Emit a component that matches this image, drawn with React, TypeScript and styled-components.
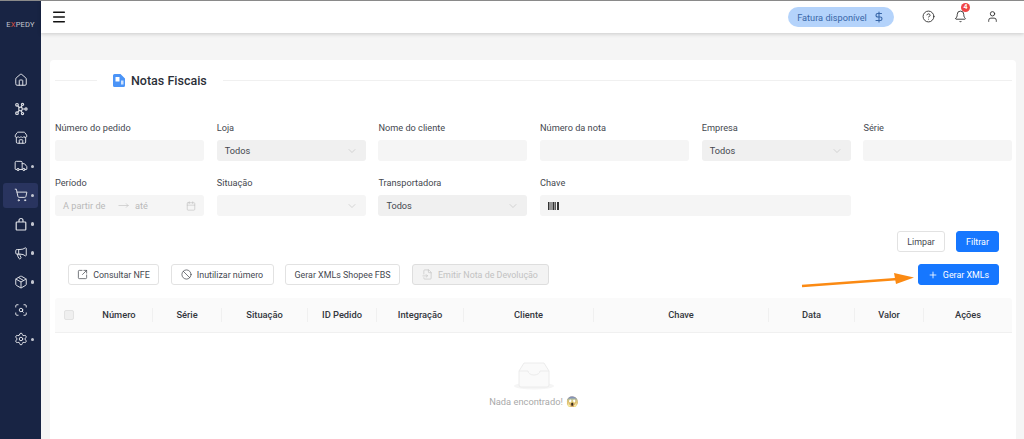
import styled, { createGlobalStyle } from "styled-components";
import {
  Ban,
  Bell,
  Calendar,
  CircleHelp,
  ChevronDown,
  DollarSign,
  Home,
  Megaphone,
  Menu,
  MoveRight,
  Package,
  Plus,
  ScanSearch,
  Settings,
  ShoppingCart,
  SquareArrowOutUpRight,
  Store,
  Truck,
  User,
  FileInput,
} from "lucide-react";

const GlobalStyle = createGlobalStyle`
  html, body { margin: 0; padding: 0; height: 100%; overflow: hidden; background: #f5f5f5; }
  * { box-sizing: border-box; }
  body { font-family: Roboto, "Noto Sans", sans-serif; color: #3f3f46; }
`;

const Page = styled.div`
  display: flex;
  width: 1024px;
  height: 439px;
  overflow: hidden;
  border-top: 1px solid #8a8a8a;
`;

const Sidebar = styled.aside`
  width: 41px;
  flex: none;
  background: #182444;
  display: flex;
  flex-direction: column;
  align-items: center;
`;

const Logo = styled.div`
  margin-top: 19px;
  height: 10px;
  font-size: 7.5px;
  line-height: 10px;
  letter-spacing: 0.2px;
  color: #c4c7d0;
  span { color: #d8503f; }
`;

const SideNav = styled.nav`
  margin-top: 37.5px;
  display: flex;
  flex-direction: column;
  gap: 3.8px;
  width: 100%;
  align-items: center;
`;

const SideItem = styled.div<{ $active?: boolean }>`
  position: relative;
  width: 35px;
  height: 25px;
  border-radius: 3px;
  background: ${(p) => (p.$active ? "#29345f" : "transparent")};
  color: #dfe1e7;
  display: flex;
  align-items: center;
  padding-left: 10.5px;
`;

const Dot = styled.i`
  position: absolute;
  left: 27.5px;
  top: 11px;
  width: 3.5px;
  height: 3.5px;
  border-radius: 50%;
  background: #c3c6d0;
`;

const Main = styled.div`
  flex: 1;
  display: flex;
  flex-direction: column;
  min-width: 0;
`;

const Header = styled.header`
  height: 32px;
  flex: none;
  background: #fff;
  box-shadow: 0 1px 4px rgba(0, 0, 0, 0.18);
  display: flex;
  align-items: center;
  padding: 0 0 0 10px;
  position: relative;
  color: #111;
`;

const Spacer = styled.div`
  flex: 1;
`;

const InvoicePill = styled.div`
  width: 106px;
  height: 20px;
  border-radius: 10px;
  background: #b4d3fb;
  color: #3766a8;
  font-size: 9.2px;
  display: flex;
  align-items: center;
  justify-content: center;
  gap: 6px;
  margin-right: 28px;
`;

const HeaderIcon = styled.div`
  position: relative;
  width: 14px;
  height: 14px;
  display: flex;
  margin-right: 18px;
  color: #333;
  &:last-child { margin-right: 24px; }
`;

const Badge = styled.span`
  position: absolute;
  left: 7px;
  top: -7px;
  width: 9px;
  height: 9px;
  border-radius: 50%;
  background: #f04545;
  color: #fff;
  font-size: 7px;
  line-height: 9px;
  text-align: center;
  font-weight: 600;
`;

const Card = styled.main`
  flex: 1;
  margin: 27px 8px 0 9px;
  background: #fff;
  border-radius: 4px 4px 0 0;
  padding: 0 4px 0 5px;
  position: relative;
`;

const TitleRow = styled.div`
  display: flex;
  align-items: center;
  height: 40px;
  margin-bottom: 21px;
`;

const TitleRule = styled.div<{ $grow?: boolean }>`
  height: 1px;
  background: #f0f0f0;
  width: 42px;
  flex: ${(p) => (p.$grow ? 1 : "none")};
`;

const Title = styled.h1`
  margin: 0;
  padding: 0 16px;
  display: flex;
  align-items: center;
  gap: 6px;
  font-size: 12.5px;
  font-weight: 500;
  color: #2b2f38;
`;

const FilterGrid = styled.section`
  display: grid;
  grid-template-columns: repeat(6, 149px);
  column-gap: 12.7px;
  row-gap: 15px;
`;

const Field = styled.label<{ $span?: number }>`
  display: flex;
  flex-direction: column;
  gap: 6px;
  grid-column: span ${(p) => p.$span ?? 1};
  font-size: 9.2px;
  line-height: 13px;
  color: #45484f;
`;

const Input = styled.div<{ $select?: boolean }>`
  height: 21px;
  border-radius: 3px;
  background: ${(p) => (p.$select ? "#f0f0f0" : "#f5f5f5")};
  display: flex;
  align-items: center;
  padding: 0 8px;
  font-size: 9.2px;
  color: #45484f;
  gap: 6px;
  white-space: nowrap;
`;

const Faded = styled.span<{ $width?: number }>`
  color: #b9b9b9;
  width: ${(p) => p.$width ?? 0}px;
`;

const Caret = styled(ChevronDown)`
  margin-left: auto;
  color: #bdbdbd;
`;

const FilterActions = styled.div`
  display: flex;
  justify-content: flex-end;
  gap: 11px;
  padding-right: 13px;
  margin-top: 15px;
`;

const Button = styled.button<{ $primary?: boolean; $width: number }>`
  height: 21px;
  width: ${(p) => p.$width}px;
  border-radius: 3px;
  border: 1px solid ${(p) => (p.$primary ? "#1677ff" : "#e2e2e2")};
  background: ${(p) => (p.$primary ? "#1677ff" : "#fff")};
  color: ${(p) => (p.$primary ? "#fff" : "#45484f")};
  font-family: inherit;
  font-size: 8.9px;
  padding: 0;
  display: inline-flex;
  align-items: center;
  justify-content: center;
  gap: 5px;
  &:disabled {
    background: #f3f3f3;
    color: #c2c2c2;
    border-color: #dedede;
  }
`;

const ActionBar = styled.div`
  display: flex;
  align-items: center;
  gap: 11.5px;
  margin-top: 12px;
  padding: 0 13px;
`;

const ActionSpacer = styled.div`
  flex: 1;
`;

const TableHead = styled.div`
  margin-top: 13px;
  height: 35px;
  background: #fafafa;
  border-bottom: 1px solid #f0f0f0;
  border-radius: 3px 3px 0 0;
  display: flex;
  align-items: center;
  width: 957px;
`;

const HeadCell = styled.div<{ $width: number; $last?: boolean }>`
  width: ${(p) => p.$width}px;
  flex: none;
  text-align: center;
  font-size: 9.3px;
  font-weight: 500;
  color: #33363d;
  line-height: 14px;
  border-right: ${(p) => (p.$last ? "none" : "1px solid #f0f0f0")};
`;

const CheckCell = styled.div`
  width: 31px;
  flex: none;
  padding-left: 9px;
`;

const Check = styled.div`
  width: 10px;
  height: 10px;
  background: #efefef;
  border: 1px solid #e2e2e2;
  border-radius: 2px;
`;

const Empty = styled.div`
  margin-top: 29px;
  width: 957px;
  display: flex;
  flex-direction: column;
  align-items: center;
  gap: 6px;
  font-size: 9.3px;
  color: #a9a9a9;
`;

const EmptyText = styled.div`
  display: flex;
  align-items: center;
  gap: 3px;
`;

const Emoji = styled.span`
  filter: saturate(0.55);
  font-size: 10px;
`;

const Arrow = styled.svg`
  position: absolute;
  left: 750px;
  top: 205px;
`;

const HubIcon = () => (
  <svg width="14" height="14" viewBox="0 0 14 14" fill="none" stroke="currentColor" strokeWidth="1.2">
    <circle cx="6.5" cy="7" r="1.8" />
    <circle cx="3" cy="2.8" r="1.3" />
    <circle cx="3" cy="11.2" r="1.3" />
    <circle cx="8.5" cy="2.4" r="1.1" />
    <circle cx="8.5" cy="11.6" r="1.1" />
    <circle cx="12" cy="7" r="1.1" />
    <path d="M3.8 3.8 5.3 5.7M3.8 10.2 5.3 8.3M8 3.4 7.2 5.3M8 10.6 7.2 8.7M8.3 7h2.6" />
  </svg>
);

const BagIcon = () => (
  <svg width="14" height="14" viewBox="0 0 14 14" fill="none" stroke="currentColor" strokeWidth="1.2" strokeLinejoin="round">
    <path d="M3 5h8a.8.8 0 0 1 .8.8v6.4a.8.8 0 0 1-.8.8H3a.8.8 0 0 1-.8-.8V5.800a.8.8 0 0 1 .8-.8z" />
    <path d="M5 5V3.500a2 2 0 0 1 4 0V5" />
  </svg>
);

const sideIcons = [
  { Icon: Home },
  { Icon: HubIcon },
  { Icon: Store },
  { Icon: Truck, dot: true },
  { Icon: ShoppingCart, dot: true, active: true },
  { Icon: BagIcon, dot: true },
  { Icon: Megaphone, dot: true },
  { Icon: Package, dot: true },
  { Icon: ScanSearch },
  { Icon: Settings, dot: true },
];

const columns: [string, number][] = [
  ["Número", 67],
  ["Série", 69],
  ["Situação", 86],
  ["ID Pedido", 69],
  ["Integração", 87],
  ["Cliente", 130],
  ["Chave", 175],
  ["Data", 86],
  ["Valor", 69],
  ["Ações", 88],
];

const Barcode = () => (
  <svg width="11" height="8" viewBox="0 0 11 8">
    <path d="M0 0h1.5v8H0zM2.5 0h1v8h-1zM4.5 0h2v8h-2zM7.2 0h.8v8h-.8zM9 0h2v8H9z" fill="#333" />
  </svg>
);

const NoteIcon = () => (
  <svg width="12" height="13" viewBox="0 0 12 13">
    <path d="M1.5 0h6L12 4.500V11.500a1.500 1.500 0 0 1-1.500 1.500h-9A1.500 1.500 0 0 1 0 11.500v-10A1.500 1.500 0 0 1 1.500 0z" fill="#4b94f7" />
    <path d="M2.500 3h4v4.500h-4z" fill="#fff" />
    <path d="M8 6.500h2.500v4H8z" fill="#cfe2fd" />
  </svg>
);

const InboxIcon = () => (
  <svg width="42" height="28" viewBox="0 0 42 28">
    <ellipse cx="21" cy="24" rx="20" ry="3.5" fill="#f5f5f5" />
    <path d="M6 9 11 1h20l5 8v14a2 2 0 0 1-2 2H8a2 2 0 0 1-2-2z" fill="#fafafa" stroke="#ececec" />
    <path d="M6 9h9a6 4 0 0 0 12 0h9" fill="none" stroke="#ececec" />
  </svg>
);

export default function App() {
  return (
    <>
      <GlobalStyle />
      <Page>
        <Sidebar>
          <Logo>
            E<span>X</span>PEDY
          </Logo>
          <SideNav>
            {sideIcons.map(({ Icon, dot, active }, i) => (
              <SideItem key={i} $active={active}>
                <Icon size={14} strokeWidth={1.7} />
                {dot && <Dot />}
              </SideItem>
            ))}
          </SideNav>
        </Sidebar>
        <Main>
          <Header>
            <Menu size={16} strokeWidth={2.2} />
            <Spacer />
            <InvoicePill>
              Fatura disponível
              <DollarSign size={12} strokeWidth={2.2} />
            </InvoicePill>
            <HeaderIcon>
              <CircleHelp size={13} strokeWidth={1.7} />
            </HeaderIcon>
            <HeaderIcon>
              <Bell size={13} strokeWidth={1.7} />
              <Badge>4</Badge>
            </HeaderIcon>
            <HeaderIcon>
              <User size={13} strokeWidth={1.7} />
            </HeaderIcon>
          </Header>
          <Card>
            <TitleRow>
              <TitleRule />
              <Title>
                <NoteIcon />
                Notas Fiscais
              </Title>
              <TitleRule $grow />
            </TitleRow>
            <FilterGrid>
              <Field>
                Número do pedido
                <Input />
              </Field>
              <Field>
                Loja
                <Input $select>
                  Todos
                  <Caret size={12} strokeWidth={1.2} />
                </Input>
              </Field>
              <Field>
                Nome do cliente
                <Input />
              </Field>
              <Field>
                Número da nota
                <Input />
              </Field>
              <Field>
                Empresa
                <Input $select>
                  Todos
                  <Caret size={12} strokeWidth={1.2} />
                </Input>
              </Field>
              <Field>
                Série
                <Input />
              </Field>
              <Field>
                Período
                <Input>
                  <Faded $width={49}>A partir de</Faded>
                  <MoveRight size={11} color="#b9b9b9" strokeWidth={1.2} />
                  <Faded $width={45}>até</Faded>
                  <Calendar size={10} color="#bdbdbd" strokeWidth={1.4} />
                </Input>
              </Field>
              <Field>
                Situação
                <Input>
                  <Caret size={12} strokeWidth={1.2} />
                </Input>
              </Field>
              <Field>
                Transportadora
                <Input $select>
                  Todos
                  <Caret size={12} strokeWidth={1.2} />
                </Input>
              </Field>
              <Field $span={2}>
                Chave
                <Input>
                  <Barcode />
                </Input>
              </Field>
            </FilterGrid>
            <FilterActions>
              <Button $width={48}>Limpar</Button>
              <Button $width={43} $primary>
                Filtrar
              </Button>
            </FilterActions>
            <ActionBar>
              <Button $width={91}>
                <SquareArrowOutUpRight size={11} strokeWidth={1.6} />
                Consultar NFE
              </Button>
              <Button $width={103}>
                <Ban size={11} strokeWidth={1.6} />
                Inutilizar número
              </Button>
              <Button $width={115}>Gerar XMLs Shopee FBS</Button>
              <Button $width={137} disabled>
                <FileInput size={11} strokeWidth={1.4} />
                Emitir Nota de Devolução
              </Button>
              <ActionSpacer />
              <Button $width={81} $primary>
                <Plus size={10} strokeWidth={2} />
                Gerar XMLs
              </Button>
            </ActionBar>
            <TableHead>
              <CheckCell>
                <Check />
              </CheckCell>
              {columns.map(([name, width], i) => (
                <HeadCell key={name} $width={width} $last={i === columns.length - 1}>
                  {name}
                </HeadCell>
              ))}
            </TableHead>
            <Empty>
              <InboxIcon />
              <EmptyText>
                Nada encontrado! <Emoji>😱</Emoji>
              </EmptyText>
            </Empty>
            <Arrow width="120" height="30" viewBox="0 0 120 30">
              <path d="M2 21 L98 14" stroke="#fb8a13" strokeWidth="2.4" fill="none" />
              <path d="M94 8 L114 12.5 L96 19 Z" fill="#fb8a13" />
            </Arrow>
          </Card>
        </Main>
      </Page>
    </>
  );
}
